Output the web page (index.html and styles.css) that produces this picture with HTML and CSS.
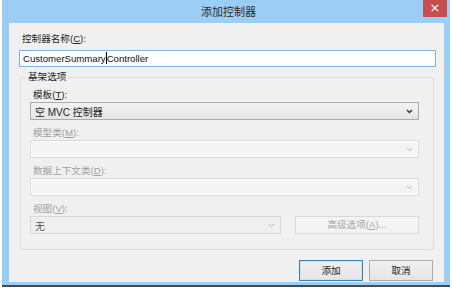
FILE: index.html
```html
<!DOCTYPE html>
<html lang="zh-CN">
<head>
    <meta charset="UTF-8">
    <title>添加控制器</title>
    <link rel="stylesheet" href="styles.css">
</head>
<body>
    <div class="window">
        <div class="title-bar">
            <span class="title">添加控制器</span>
            <span class="close-btn">&times;</span>
        </div>
        <div class="client">
            <label class="label">控制器名称(<u>C</u>):</label>
            <div class="text-box">CustomerSummary<span class="caret"></span>Controller</div>

            <fieldset class="group">
                <legend>基架选项</legend>
                <label class="label first">模板(<u>T</u>):</label>
                <div class="combo">
                    <span>空 MVC 控制器</span>
                    <svg class="arrow" width="7" height="5" viewBox="0 0 7 5"><path d="M1 1l2.5 2.5L6 1" fill="none" stroke="#333" stroke-width="1.4"/></svg>
                </div>
                <label class="label disabled">模型类(<u>M</u>):</label>
                <div class="combo off">
                    <span></span>
                    <svg class="arrow" width="7" height="5" viewBox="0 0 7 5"><path d="M1 1l2.5 2.5L6 1" fill="none" stroke="#b8b8b8" stroke-width="1"/></svg>
                </div>
                <label class="label disabled">数据上下文类(<u>D</u>):</label>
                <div class="combo off">
                    <span></span>
                    <svg class="arrow" width="7" height="5" viewBox="0 0 7 5"><path d="M1 1l2.5 2.5L6 1" fill="none" stroke="#b8b8b8" stroke-width="1"/></svg>
                </div>
                <label class="label disabled">视图(<u>V</u>):</label>
                <div class="view-row">
                    <div class="combo view off-dark">
                        <span>无</span>
                        <svg class="arrow" width="7" height="5" viewBox="0 0 7 5"><path d="M1 1l2.5 2.5L6 1" fill="none" stroke="#b8b8b8" stroke-width="1"/></svg>
                    </div>
                    <div class="btn disabled-btn">高级选项(<u>A</u>)...</div>
                </div>
            </fieldset>

            <div class="actions">
                <div class="btn primary">添加</div>
                <div class="btn">取消</div>
            </div>
        </div>
    </div>
</body>
</html>
```

FILE: styles.css
```css
body {
    margin: 0;
    background: #ffffff;
    font-family: "Liberation Sans", "Noto Sans CJK SC", sans-serif;
    font-size: 9.6px;
    color: #1e1e1e;
}
.window {
    margin-left: 2px;
    width: 448px;
    height: 287px;
    background: #9bcdf5;
    border-bottom: 2px solid #4a4a4a;
    box-sizing: border-box;
    display: flex;
    flex-direction: column;
    padding: 0 6px 3px 7px;
}
.title-bar {
    height: 23px;
    display: flex;
    align-items: center;
    justify-content: center;
    position: relative;
}
.title {
    font-size: 11px;
    color: #2b2b2b;
    margin: 0 0 1px 4px;
}
.close-btn {
    position: absolute;
    top: 0;
    right: -3px;
    width: 24px;
    height: 17px;
    background: #c74e4e;
    color: #ffffff;
    font-size: 13px;
    line-height: 16px;
    text-align: center;
    font-family: "DejaVu Sans", sans-serif;
}
.client {
    flex: 1;
    background: #f0f0f0;
    padding: 10px 0 0 10px;
    display: flex;
    flex-direction: column;
}
.label {
    display: block;
    height: 12px;
    line-height: 12px;
    padding-left: 3px;
}
.label u {
    text-decoration: underline;
}
.disabled {
    color: #a0a0a0;
}
.text-box {
    margin-top: 5px;
    width: 417px;
    height: 17px;
    box-sizing: border-box;
    background: #ffffff;
    border: 1px solid #7eb4ea;
    line-height: 15px;
    padding-left: 3px;
    font-size: 9.6px;
    color: #111;
}
.caret {
    display: inline-block;
    width: 1px;
    height: 12px;
    background: #000;
    vertical-align: -2px;
}
.group {
    margin: 4px 0 0 1px;
    width: 414px;
    box-sizing: border-box;
    border: 1px solid #dcdcdc;
    border-radius: 3px;
    padding: 0 0 15px 9px;
    min-width: 0;
}
.group legend {
    padding: 0 2px;
    margin-left: -4px;
    line-height: 12px;
}
.group .label {
    margin-top: 7px;
}
.group .label.first {
    margin-top: 6px;
}
.combo {
    margin-top: 1px;
    width: 389px;
    height: 18px;
    box-sizing: border-box;
    border: 1px solid #acacac;
    background: linear-gradient(#f2f2f2, #e5e5e5);
    display: flex;
    align-items: center;
    justify-content: space-between;
    padding: 0 5px 0 4px;
    font-size: 10px;
}
.arrow {
    display: block;
}
.off {
    background: #f4f4f4;
    border-color: #d9d9d9;
    box-shadow: inset 0 0 0 1px #ffffff;
}
.view-row {
    display: flex;
    gap: 14px;
    margin-top: 1px;
}
.view-row .combo {
    margin-top: 0;
}
.view {
    width: 251px;
}
.off-dark {
    background: #efefef;
    border-color: #d9d9d9;
    color: #555;
}
.btn {
    width: 64px;
    height: 21px;
    box-sizing: border-box;
    border: 1px solid #acacac;
    background: linear-gradient(#f0f0f0, #e5e5e5);
    text-align: center;
    line-height: 19px;
    color: #222;
}
.disabled-btn {
    width: 124px;
    height: 18px;
    line-height: 16px;
    color: #a8a8a8;
    background: #f4f4f4;
    border-color: #d9d9d9;
}
.primary {
    border-color: #3c7fb1;
    box-shadow: inset 0 0 0 1px #c8e2f6;
}
.actions {
    display: flex;
    justify-content: flex-end;
    gap: 6px;
    margin-top: 10px;
    padding-right: 11px;
}
```
